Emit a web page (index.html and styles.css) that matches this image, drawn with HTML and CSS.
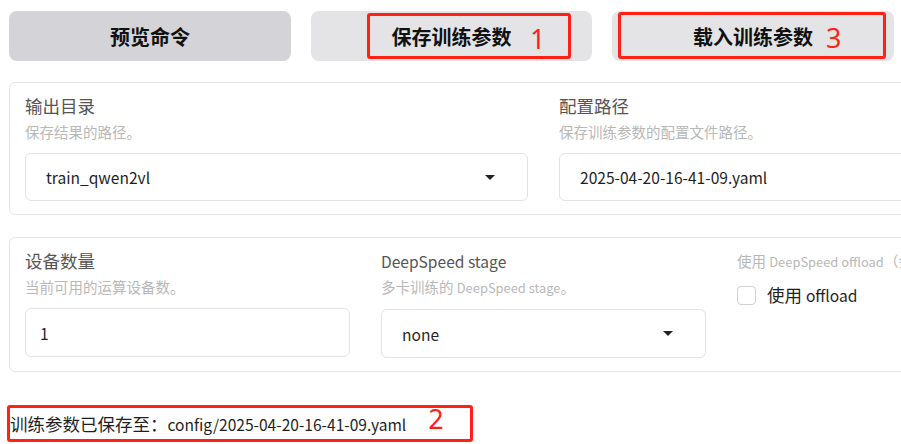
FILE: index.html
```html
<!DOCTYPE html>
<html lang="zh-CN">
<head>
    <meta charset="UTF-8" />
    <meta name="viewport" content="width=device-width, initial-scale=1.0" />
    <title>训练参数</title>
    <link rel="stylesheet" href="styles.css">
</head>
<body>
    <main class="page">
        <div class="actions">
            <button class="btn btn-dark">预览命令</button>
            <button class="btn">保存训练参数
                <span class="mark mark-save"><span class="num">1</span></span>
            </button>
            <button class="btn">载入训练参数
                <span class="mark mark-load"><span class="num">3</span></span>
            </button>
        </div>

        <section class="panel cols-2">
            <div class="field">
                <div class="label">输出目录</div>
                <div class="info">保存结果的路径。</div>
                <div class="input select">
                    <span class="en">train_qwen2vl</span>
                    <span class="caret"></span>
                </div>
            </div>
            <div class="field">
                <div class="label">配置路径</div>
                <div class="info">保存训练参数的配置文件路径。</div>
                <div class="input">
                    <span class="en">2025-04-20-16-41-09.yaml</span>
                </div>
            </div>
        </section>

        <section class="panel cols-3">
            <div class="field">
                <div class="label">设备数量</div>
                <div class="info">当前可用的运算设备数。</div>
                <div class="input input-num">
                    <span class="en">1</span>
                </div>
            </div>
            <div class="field">
                <div class="label"><span class="en">DeepSpeed stage</span></div>
                <div class="info">多卡训练的 <span class="en">DeepSpeed stage</span>。</div>
                <div class="input select">
                    <span class="en">none</span>
                    <span class="caret"></span>
                </div>
            </div>
            <div class="field">
                <div class="info info-top">使用 <span class="en">DeepSpeed offload</span>（会减慢速度）。</div>
                <label class="check">
                    <span class="box"></span>
                    <span>使用 <span class="en">offload</span></span>
                </label>
            </div>
        </section>

        <div class="saved">
            <span>训练参数已保存至：<span class="en">config/2025-04-20-16-41-09.yaml</span></span>
            <span class="num">2</span>
        </div>
    </main>
</body>
</html>
```

FILE: styles.css
```css
body {
    margin: 0;
    background: #fff;
    color: #1f1f1f;
    font-family: "Noto Sans CJK SC", "Noto Sans", sans-serif;
    overflow: hidden;
}
.page {
    width: 1069px;
    padding: 11px 0 0 9px;
    display: grid;
    grid-template-columns: 1069px;
    gap: 21px;
}
.en {
    font-size: 0.89em;
}
.actions {
    display: grid;
    grid-template-columns: 282px 281px 282px;
    gap: 20px;
}
.btn {
    position: relative;
    height: 50px;
    border: none;
    border-radius: 8px;
    background: #e4e4e7;
    color: #111;
    font-family: inherit;
    font-size: 20px;
    font-weight: 700;
    padding: 0;
}
.btn-dark {
    background: #d4d4d8;
}
.mark {
    position: absolute;
    border: 3px solid #ff2116;
    border-radius: 3px;
    box-sizing: border-box;
}
.mark-save {
    left: 56px;
    top: 2px;
    width: 204px;
    height: 46px;
}
.mark-load {
    left: 6px;
    top: 1px;
    width: 268px;
    height: 47px;
}
.num {
    color: #ff2116;
    font-family: "Noto Sans", sans-serif;
    font-size: 27px;
    font-weight: 400;
    line-height: 1;
}
.mark .num {
    position: absolute;
    top: 9px;
}
.mark-save .num { left: 160px; }
.mark-load .num { left: 205px; }

.panel {
    border: 1px solid #e5e5e5;
    border-radius: 6px;
    padding: 11px 15px 13px;
    display: grid;
    gap: 31px;
}
.cols-2 { grid-template-columns: 1fr 1fr; }
.cols-3 {
    grid-template-columns: 1fr 1fr 1fr;
    margin-top: 1px;
}
.label {
    font-size: 17.5px;
    line-height: 24px;
    color: #555;
}
.info {
    font-size: 14.5px;
    line-height: 20px;
    color: #b8b8b8;
    margin-top: 4px;
    white-space: nowrap;
}
.info-top {
    margin-top: 2px;
}
.input {
    margin-top: 11px;
    height: 48px;
    border: 1px solid #e2e2e2;
    border-radius: 6px;
    box-sizing: border-box;
    display: flex;
    align-items: center;
    justify-content: space-between;
    padding: 0 32px 0 20px;
    font-size: 17.5px;
    color: #1f1f1f;
}
.cols-3 .input {
    height: 49px;
}
.input-num {
    padding-left: 14px;
}
.caret {
    width: 0;
    height: 0;
    border-left: 5px solid transparent;
    border-right: 5px solid transparent;
    border-top: 5px solid #222;
}
.check {
    display: flex;
    align-items: center;
    gap: 11px;
    margin-top: 11px;
    font-size: 17.5px;
    line-height: 24px;
    color: #1f1f1f;
}
.box {
    width: 19px;
    height: 19px;
    box-sizing: border-box;
    border: 1px solid #d0d0d0;
    border-radius: 4px;
}
.saved {
    margin: 12px 0 0 -2px;
    width: 466px;
    height: 37px;
    box-sizing: border-box;
    border: 3px solid #ff2116;
    border-radius: 3px;
    display: flex;
    align-items: center;
    font-size: 17.5px;
    color: #1f1f1f;
    white-space: nowrap;
}
.saved .num {
    margin-left: 22px;
    margin-top: -10px;
}
```
